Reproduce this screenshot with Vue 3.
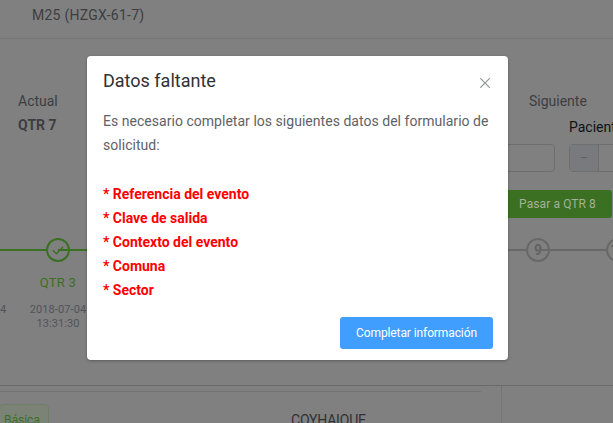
<template>
  <div class="page">
    <header class="topbar">M25 (HZGX-61-7)</header>

    <section class="summary">
      <div class="status-row">
        <div class="current">
          <div class="status-label">Actual</div>
          <div class="status-value">QTR 7</div>
        </div>
        <div class="next">
          <div class="next-label">Siguiente</div>
          <div class="next-fields">
            <div class="text-box"></div>
            <div class="patient">
              <div class="patient-label">Paciente</div>
              <div class="stepper">
                <span class="stepper-btn">–</span>
                <span class="stepper-value"></span>
              </div>
            </div>
          </div>
          <button class="pass-btn">Pasar a QTR 8</button>
        </div>
      </div>

      <div class="timeline">
        <div v-for="step in steps" :key="step.n" class="step" :class="{ done: step.done }">
          <div class="step-circle">
            <svg v-if="step.done" width="12" height="9" viewBox="0 0 12 9">
              <path d="M0.8 4.3 L4.4 7.8 L11.2 0.8" fill="none" stroke="#3b7022" stroke-width="1.3" />
            </svg>
            <span v-else>{{ step.n }}</span>
          </div>
          <div v-if="step.label" class="step-name">{{ step.label }}</div>
          <div v-if="step.date" class="step-date" :class="{ 'no-name': !step.label }">{{ step.date }}<br />{{ step.time }}</div>
        </div>
      </div>
    </section>

    <section class="details">
      <div class="details-main">
        <div class="details-inner">
          <span class="tag">Básica</span>
          <span class="city">COYHAIQUE</span>
        </div>
      </div>
    </section>

    <div class="dialog-wrap">
      <div class="dialog">
        <div class="dialog-head">
          <span class="dialog-title">Datos faltante</span>
          <svg class="close" width="10" height="10" viewBox="0 0 10 10">
            <path d="M0.3 0.3 L9.7 9.7 M9.7 0.3 L0.3 9.7" stroke="#909399" stroke-width="1.2" fill="none" />
          </svg>
        </div>
        <div class="dialog-body">
          <p class="intro">Es necesario completar los siguientes datos del formulario de solicitud:</p>
          <ul class="missing">
            <li v-for="item in missing" :key="item">* {{ item }}</li>
          </ul>
        </div>
        <div class="dialog-foot">
          <button class="primary">Completar información</button>
        </div>
      </div>
    </div>
  </div>
</template>

<script setup>
const missing = ['Referencia del evento', 'Clave de salida', 'Contexto del evento', 'Comuna', 'Sector']

// only what shows around the dialog carries text
const steps = [
  { n: 2, done: true, date: '2018-07-04', time: '' },
  { n: 3, done: true, label: 'QTR 3', date: '2018-07-04', time: '13:31:30' },
  { n: 4, done: true },
  { n: 5, done: true },
  { n: 6, done: true },
  { n: 7, done: true },
  { n: 8, done: false },
  { n: 9, done: false },
  { n: 10, done: false }
]
</script>

<style>
html, body {
  margin: 0;
  overflow: hidden;
}
</style>

<style scoped>
.page {
  position: relative;
  width: 613px;
  height: 423px;
  overflow: hidden;
  background: #808080;
  font-family: Roboto, "Liberation Sans", sans-serif;
  color: #3c3e42;
}

.topbar {
  height: 39px;
  box-sizing: border-box;
  padding: 7px 0 0 32px;
  font-size: 14px;
  line-height: 16px;
  letter-spacing: 0.25px;
  border-bottom: 1px solid #747474;
}

.summary {
  height: 347px;
  box-sizing: border-box;
  border-bottom: 1px solid #6a6a6a;
}

.status-row {
  display: flex;
  justify-content: space-between;
  height: 199px;
  box-sizing: border-box;
  padding: 54px 0 0 18px;
}

.status-label {
  font-size: 14px;
  line-height: 16px;
}

.status-value {
  margin-top: 8px;
  font-size: 14px;
  line-height: 16px;
  font-weight: 700;
}

.next {
  width: 123px;
  margin-right: 1px;
}

.next-label {
  padding-left: 40px;
  font-size: 14px;
  line-height: 16px;
}

.next-fields {
  display: flex;
  gap: 14px;
}

.text-box {
  flex: 0 0 66px;
  height: 28px;
  margin-top: 35px;
  box-sizing: border-box;
  border: 1px solid #6e6e6e;
  border-radius: 4px;
}

.patient {
  flex: none;
}

.patient-label {
  margin-top: 9px;
  font-size: 14px;
  line-height: 18px;
  color: #111;
  white-space: nowrap;
}

.stepper {
  display: flex;
  width: 80px;
  height: 28px;
  box-sizing: border-box;
  margin-top: 8px;
  border: 1px solid #6e6e6e;
  border-radius: 4px;
}

.stepper-btn {
  width: 29px;
  box-sizing: border-box;
  text-align: center;
  line-height: 25px;
  font-size: 13px;
  color: #5f6165;
  background: #787a7d;
  border-right: 1px solid #6e6e6e;
}

.pass-btn {
  display: block;
  width: 109px;
  height: 28px;
  margin: 18px 0 0 auto;
  padding: 0;
  border: none;
  border-radius: 3px;
  background: #3b7022;
  color: #a3b299;
  font-family: inherit;
  font-size: 12px;
  letter-spacing: 0.1px;
}

.timeline {
  display: flex;
  margin-left: -62px;
}

.step {
  flex: 0 0 80px;
  position: relative;
  text-align: center;
}

.step::before {
  content: "";
  position: absolute;
  top: 11px;
  left: -40px;
  width: 80px;
  height: 2px;
  background: #686868;
}

.step.done::before {
  background: #3b7022;
}

.step-circle {
  position: relative;
  width: 24px;
  height: 24px;
  box-sizing: border-box;
  margin: 0 auto;
  display: flex;
  align-items: center;
  justify-content: center;
  border: 2px solid #686868;
  border-radius: 50%;
  background: #808080;
  color: #626262;
  font-size: 14px;
  font-weight: 700;
}

.step.done .step-circle {
  border-color: #3b7022;
}

.step-name {
  margin-top: 13px;
  font-size: 13px;
  line-height: 16px;
  letter-spacing: 0.3px;
  color: #3b7022;
}

.step-date {
  margin-top: 12px;
  font-size: 11px;
  line-height: 14px;
  letter-spacing: 0.1px;
  color: #525458;
  white-space: nowrap;
}

.step-date.no-name {
  margin-top: 41px;
}

.details {
  display: flex;
  height: 37px;
}

.details-main {
  width: 502px;
  box-sizing: border-box;
  padding: 5px 20px 0 0;
  border-right: 1px solid #747474;
}

.details-inner {
  display: flex;
  border-top: 1px solid #747474;
  height: 100%;
}

.tag {
  width: 50px;
  height: 30px;
  box-sizing: border-box;
  margin: 12px 0 0 -1px;
  padding: 7px 0 0 4px;
  border: 1px solid #6f8068;
  border-radius: 4px;
  background: #7b8377;
  color: #3b7022;
  font-size: 12px;
  line-height: 16px;
}

.city {
  margin: 20px 0 0 242px;
  font-size: 14px;
  line-height: 16px;
  letter-spacing: -0.2px;
  color: #303134;
}

.dialog-wrap {
  position: absolute;
  inset: 0;
}

.dialog {
  position: absolute;
  left: 87px;
  top: 56px;
  width: 421px;
  height: 304px;
  box-sizing: border-box;
  display: flex;
  flex-direction: column;
  background: #fff;
  border-radius: 4px;
  box-shadow: 0 1px 3px rgba(0, 0, 0, 0.3);
}

.dialog-head {
  display: flex;
  justify-content: space-between;
  align-items: flex-start;
  padding: 13px 18px 0 16px;
}

.dialog-title {
  font-size: 18px;
  line-height: 24px;
  color: #303133;
}

.close {
  margin-top: 9px;
}

.dialog-body {
  flex: 1;
  padding: 16px 16px 0;
  font-size: 14px;
  line-height: 24px;
  color: #606266;
}

.intro {
  margin: 0;
  letter-spacing: 0.03px;
}

.missing {
  list-style: none;
  margin: 25px 0 0;
  padding: 0;
  color: #ff0000;
  font-weight: 700;
}

.dialog-foot {
  display: flex;
  justify-content: flex-end;
  padding: 0 15px 11px 0;
}

.primary {
  width: 153px;
  height: 32px;
  padding: 0;
  border: none;
  border-radius: 3px;
  background: #409eff;
  color: #fff;
  font-family: inherit;
  font-size: 12px;
  letter-spacing: -0.1px;
}
</style>
